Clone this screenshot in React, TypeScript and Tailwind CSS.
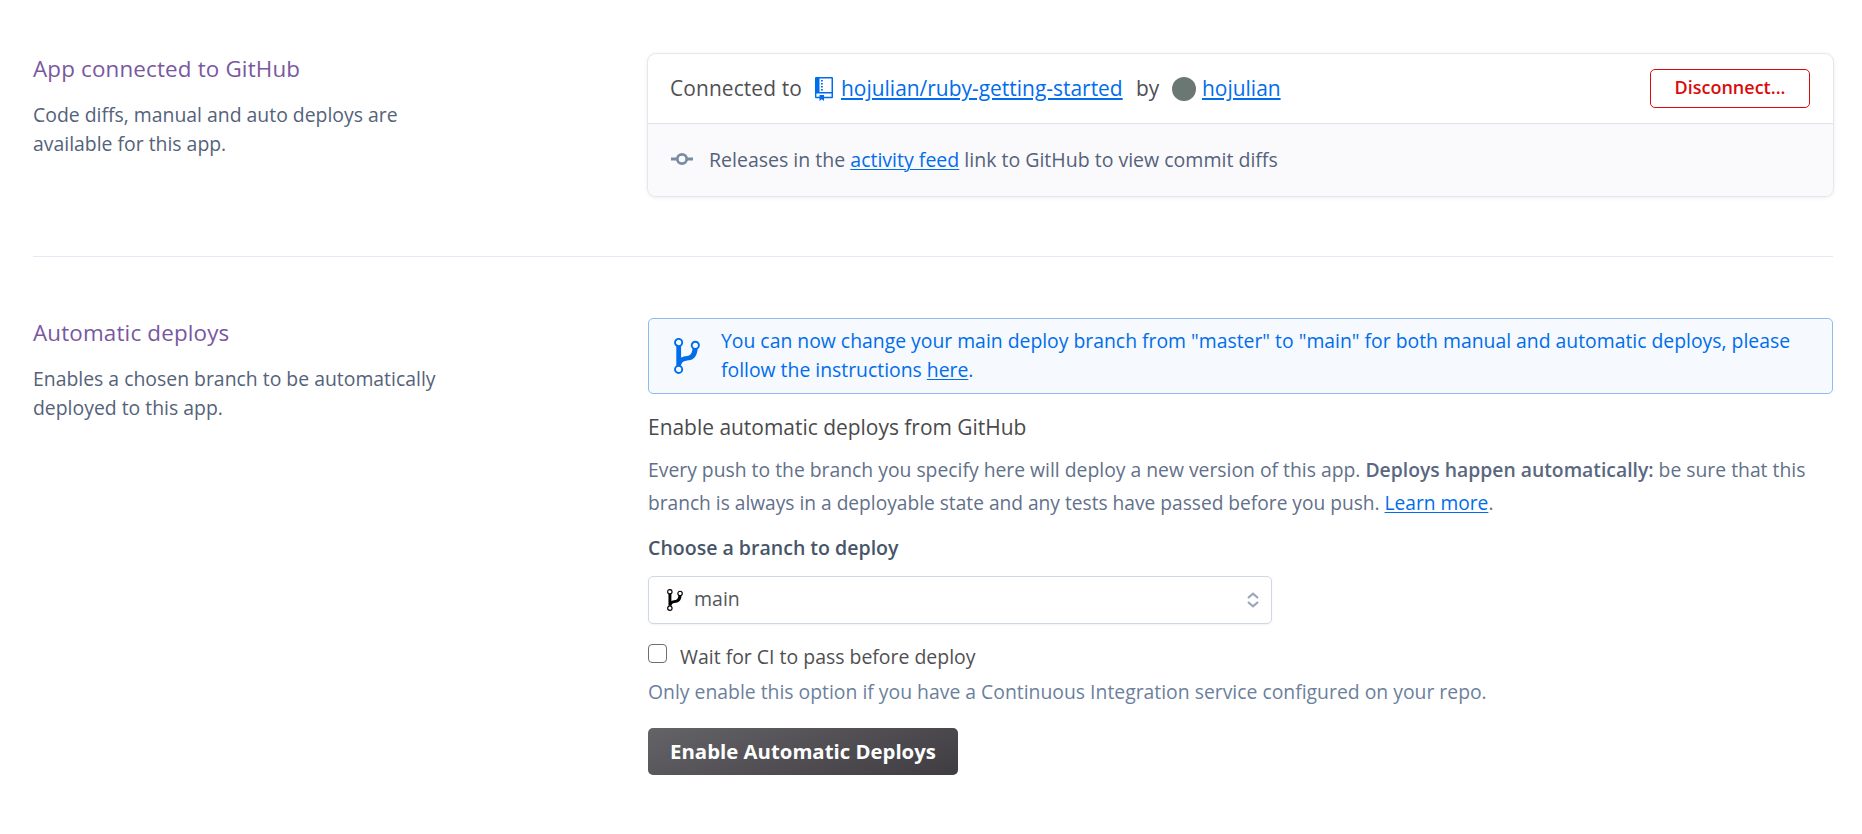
import type { ReactNode } from "react";

function RepoIcon() {
  return (
    <svg width="18" height="24" viewBox="0 0 18 24" className="shrink-0" fill="none">
      <path
        fillRule="evenodd"
        fill="#006deb"
        d="M1 0h16a1 1 0 0 1 1 1v19.2a1 1 0 0 1-1 1H9V24l-2.2-1.7L4.5 24v-2.8H1a1 1 0 0 1-1-1V1a1 1 0 0 1 1-1zM4.5 1.4V15h12V1.4zM1.4 16.5v3.2h3.1V18H9v1.7h7.5v-3.2z"
      />
      <path fill="#006deb" d="M6 3h1.8v1.5H6zM6 6h1.8v1.5H6zM6 9h1.8v1.5H6zM6 12h1.8v1.5H6z" />
    </svg>
  );
}

function CommitIcon() {
  return (
    <svg width="22" height="14" viewBox="0 0 22 14" className="shrink-0" fill="none" stroke="#7c8ba4">
      <circle cx="11" cy="7" r="4.7" strokeWidth="2.8" />
      <path d="M0 7h6M16 7h6" strokeWidth="3.2" />
    </svg>
  );
}

function BranchIcon({ className }: { className: string }) {
  return (
    <svg viewBox="0 0 26 36" className={className} fill="none" stroke="currentColor">
      <circle cx="4.6" cy="4.5" r="3.6" strokeWidth="1.9" />
      <circle cx="21.3" cy="7.3" r="3.6" strokeWidth="1.9" />
      <circle cx="4.6" cy="31.4" r="3.6" strokeWidth="1.9" />
      <path d="M4.700 8v19.500" strokeWidth="4.800" />
      <path
        d="M18.600 10.500h5.100c-.3 5-2 8.900-5.200 10.700-2.600 1.400-5.700.9-8.400 2.100-1.900.9-2.900 2.400-3.200 4.700L4.600 21.600c2-2.300 4.500-2.900 7-3.300 4.200-.6 6.200-1.500 7-7.800z"
        fill="currentColor"
        stroke="none"
      />
    </svg>
  );
}

function SelectArrows() {
  return (
    <svg width="12" height="16" viewBox="0 0 12 16" className="shrink-0" fill="none" stroke="#9aa5bb" strokeWidth="2.2">
      <path d="M1 6l5-4.300L11 6M1 10l5 4.300L11 10" />
    </svg>
  );
}

function Intro({ title, children }: { title: string; children: ReactNode }) {
  return (
    <div className="w-[615px] shrink-0">
      <h2 className="pt-px text-[22.4px] leading-[34px] tracking-[0.16px] text-[#79589f]">{title}</h2>
      <p className="mt-[14px] text-[19.4px] leading-[29px] text-[#54627a]">{children}</p>
    </div>
  );
}

const link = "text-[#006deb] underline decoration-1 underline-offset-2";
const bigLink = "text-[20.95px] text-[#006deb] underline decoration-2 underline-offset-2";

export default function App() {
  return (
    <main className="h-[834px] w-[1862px] overflow-hidden whitespace-nowrap bg-white pl-[33px] pr-[29px] font-['Open_Sans',sans-serif]">
      <section className="flex h-[257px] border-b border-[#e3eaf3] pt-[51px]">
        <Intro title="App connected to GitHub">
          Code diffs, manual and auto deploys are
          <br />
          available for this app.
        </Intro>
        <div className="mt-[3px] h-[142px] flex-1 overflow-hidden rounded-[8px] shadow-[0_0_0_1px_#e4e7ee,0_1px_4px_1px_rgba(0,0,0,0.07)]">
          <div className="flex h-[70px] items-center border-b border-[#dfe2ea] pl-[22px] pr-[23px] text-[20.9px] leading-[30px] text-[#4f4f52]">
            <span className="w-[145px] pb-px tracking-[0.12px]">Connected to</span>
            <RepoIcon />
            <a className={`ml-2 w-[295px] pb-px ${bigLink}`}>hojulian/ruby-getting-started</a>
            <span className="w-[36px] pb-px">by</span>
            <span className="size-6 rounded-full bg-[#6b7773]" />
            <a className={`ml-[6px] pb-px ${bigLink}`}>hojulian</a>
            <button className="ml-auto h-[39px] w-[160px] rounded-[5px] border border-[#da0b0b] pb-[3px] text-[18px] font-semibold leading-[34px] text-[#da0b0b]">
              Disconnect...
            </button>
          </div>
          <div className="flex h-[72px] items-center bg-[#fafafd] pb-[2px] pl-[23px] text-[19.52px] leading-[29px] text-[#54627a]">
            <CommitIcon />
            <p className="ml-4">
              Releases in the <a className={link}>activity feed</a> link to GitHub to view commit diffs
            </p>
          </div>
        </div>
      </section>

      <section className="flex pt-[58px]">
        <Intro title="Automatic deploys">
          Enables a chosen branch to be automatically
          <br />
          deployed to this app.
        </Intro>
        <div className="mt-[3px] flex-1">
          <div className="flex h-[76px] rounded-[5px] border border-[#8fbcf0] bg-[#f6f9fe] pl-[25px] pt-[7px] text-[19.38px] leading-[29px] text-[#006deb]">
            <BranchIcon className="mt-[12px] h-9 w-[26px] shrink-0" />
            <p className="ml-[21px]">
              You can now change your main deploy branch from "master" to "main" for both manual and automatic deploys, please
              <br />
              follow the instructions <a className={link}>here</a>.
            </p>
          </div>
          <h3 className="mt-[18px] text-[20.95px] leading-[30px] text-[#4a4a4d]">Enable automatic deploys from GitHub</h3>
          <p className="mt-[11px] text-[19.33px] leading-[33px] text-[#62708a]">
            Every push to the branch you specify here will deploy a new version of this app.{" "}
            <b className="font-semibold text-[#596780]">Deploys happen automatically:</b> be sure that this
            <br />
            <span className="text-[19.17px]">
              branch is always in a deployable state and any tests have passed before you push. <a className={link}>Learn more</a>.
            </span>
          </p>
          <h4 className="mt-[13px] text-[19.55px] font-semibold leading-[29px] text-[#475569]">Choose a branch to deploy</h4>
          <div className="mt-[14px] flex h-12 w-[624px] items-center rounded-[5px] border border-[#cfd7e6] pl-[18px] pr-[12px] text-[19.5px] leading-[29px] text-[#55565a] shadow-[0_1px_2px_rgba(0,0,0,0.05)]">
            <BranchIcon className="h-[22px] w-4 text-black" />
            <span className="ml-[11px] flex-1 pb-[3px]">main</span>
            <SelectArrows />
          </div>
          <label className="mt-[18px] flex text-[19.45px] leading-[29px] text-[#4f4f52]">
            <span className="mt-[2px] size-[19px] rounded-[4px] border border-[#6f6f73] bg-white" />
            <span className="ml-[13px]">Wait for CI to pass before deploy</span>
          </label>
          <p className="mt-[6px] text-[19.37px] leading-[29px] text-[#6c7f9c]">
            Only enable this option if you have a Continuous Integration service configured on your repo.
          </p>
          <button className="mt-[22px] h-[47px] w-[310px] rounded-[5px] bg-[linear-gradient(160deg,#646367,#3f3c42)] text-[20.35px] font-bold leading-[47px] text-white">
            Enable Automatic Deploys
          </button>
        </div>
      </section>
    </main>
  );
}
